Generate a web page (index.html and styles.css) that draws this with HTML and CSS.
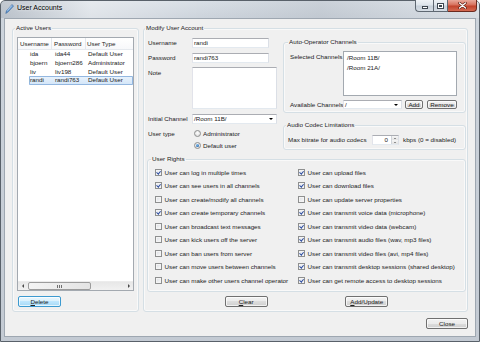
FILE: index.html
```html
<!DOCTYPE html>
<html>
<head>
<meta charset="utf-8">
<title>User Accounts</title>
<link rel="stylesheet" href="styles.css">
</head>
<body>
<div class="window">
  <div class="titlebar">
    <svg class="app-icon" width="9" height="10" viewBox="0 0 9 10">
      <path d="M7 0.6 L8.5 2.1 L3.2 7.8 L0.8 9.4 L1.6 6.6 Z" fill="#6c9fd6" stroke="#2f5f97" stroke-width="0.6"/>
      <path d="M6.9 1.4 L2.2 6.6" stroke="#e4f1ff" stroke-width="0.7"/>
    </svg>
    <span class="title">User Accounts</span>
    <div class="caption">
      <span class="cap cap-min"><span class="g-min"></span></span>
      <span class="cap cap-max"><span class="g-max"></span></span>
      <span class="cap cap-close">
        <svg width="9" height="7" viewBox="0 0 9 7">
          <path d="M1.5 1 L7.5 6 M7.5 1 L1.5 6" stroke="#5a1d12" stroke-width="2.6" stroke-linecap="round"/>
          <path d="M1.5 1 L7.5 6 M7.5 1 L1.5 6" stroke="#ffffff" stroke-width="1.3" stroke-linecap="round"/>
        </svg>
      </span>
    </div>
  </div>

  <div class="client">
    <div class="groups">
      <fieldset class="group active-users">
        <legend>Active Users</legend>
        <div class="listview">
          <div class="lv-header">
            <span class="h1">Username</span><span class="h2">Password</span><span class="h3">User Type</span>
          </div>
          <div class="lv-row"><div class="lv-cells"><span class="d1">ida</span><span class="d2">ida44</span><span class="d3">Default User</span></div></div>
          <div class="lv-row"><div class="lv-cells"><span class="d1">bjoern</span><span class="d2">bjoern286</span><span class="d3">Administrator</span></div></div>
          <div class="lv-row"><div class="lv-cells"><span class="d1">liv</span><span class="d2">liv198</span><span class="d3">Default User</span></div></div>
          <div class="lv-row sel"><div class="lv-cells"><span class="d1">randi</span><span class="d2">randi763</span><span class="d3">Default User</span></div></div>
          <div class="lv-fill"></div>
          <div class="hscroll">
            <span class="sb-btn"><span class="arr-left"></span></span>
            <span class="sb-track"><span class="sb-thumb"><span class="grip"></span></span></span>
            <span class="sb-btn"><span class="arr-right"></span></span>
          </div>
        </div>
        <button class="btn btn-focus btn-delete"><u>D</u>elete</button>
      </fieldset>

      <fieldset class="group modify">
        <legend>Modify User Account</legend>
        <div class="top">
          <div class="form">
            <span class="lbl mid">Username</span>
            <div class="edit w-short">randi</div>
            <span class="lbl mid">Password</span>
            <div class="edit w-short">randi763</div>
            <span class="lbl note-lbl">Note</span>
            <div class="edit textarea"></div>
            <span class="lbl mid">Initial Channel</span>
            <div class="combo"><span>/Room 11B/</span><span class="drop"></span></div>
            <span class="lbl type-lbl">User type</span>
            <div class="radios">
              <div class="radio-item"><span class="radio"></span><span>Administrator</span></div>
              <div class="radio-item"><span class="radio on"></span><span>Default user</span></div>
            </div>
          </div>

          <div class="right-col">
            <fieldset class="group autoop">
              <legend>Auto-Operator Channels</legend>
              <div class="ao-grid">
                <span class="lbl sel-lbl">Selected Channels</span>
                <div class="listbox">
                  <div class="lb-item">/Room 11B/</div>
                  <div class="lb-item">/Room 21A/</div>
                </div>
                <span class="lbl mid">Available Channels</span>
                <div class="avail-row">
                  <div class="combo combo-small"><span>/</span><span class="drop"></span></div>
                  <button class="btn btn-add">Add</button>
                  <button class="btn btn-remove">Remove</button>
                </div>
              </div>
            </fieldset>
            <fieldset class="group audio">
              <legend>Audio Codec Limitations</legend>
              <div class="audio-row">
                <span class="lbl bitrate-lbl">Max bitrate for audio codecs</span>
                <div class="spin"><span class="spin-val">0</span><span class="spin-btns"><span class="sp-up"></span><span class="sp-down"></span></span></div>
                <span class="lbl">kbps (0 = disabled)</span>
              </div>
            </fieldset>
          </div>
        </div>

        <fieldset class="group rights">
          <legend>User Rights</legend>
          <div class="rights-grid">
            <div class="chk-item"><span class="chk on"></span><span>User can log in multiple times</span></div>
            <div class="chk-item"><span class="chk on"></span><span>User can upload files</span></div>
            <div class="chk-item"><span class="chk on"></span><span>User can see users in all channels</span></div>
            <div class="chk-item"><span class="chk on"></span><span>User can download files</span></div>
            <div class="chk-item"><span class="chk"></span><span>User can create/modify all channels</span></div>
            <div class="chk-item"><span class="chk"></span><span>User can update server properties</span></div>
            <div class="chk-item"><span class="chk on"></span><span>User can create temporary channels</span></div>
            <div class="chk-item"><span class="chk on"></span><span>User can transmit voice data (microphone)</span></div>
            <div class="chk-item"><span class="chk"></span><span>User can broadcast text messages</span></div>
            <div class="chk-item"><span class="chk on"></span><span>User can transmit video data (webcam)</span></div>
            <div class="chk-item"><span class="chk"></span><span>User can kick users off the server</span></div>
            <div class="chk-item"><span class="chk on"></span><span>User can transmit audio files (wav, mp3 files)</span></div>
            <div class="chk-item"><span class="chk"></span><span>User can ban users from server</span></div>
            <div class="chk-item"><span class="chk on"></span><span>User can transmit video files (avi, mp4 files)</span></div>
            <div class="chk-item"><span class="chk"></span><span>User can move users between channels</span></div>
            <div class="chk-item"><span class="chk on"></span><span>User can transmit desktop sessions (shared desktop)</span></div>
            <div class="chk-item"><span class="chk"></span><span>User can make other users channel operator</span></div>
            <div class="chk-item"><span class="chk on"></span><span>User can get remote access to desktop sessions</span></div>
          </div>
        </fieldset>

        <div class="action-row">
          <button class="btn btn-wide"><u>C</u>lear</button>
          <button class="btn btn-wide"><u>A</u>dd/Update</button>
        </div>
      </fieldset>
    </div>

    <div class="footer">
      <button class="btn btn-close">Close</button>
    </div>
  </div>
</div>
</body>
</html>
```

FILE: styles.css
```css
* { box-sizing: border-box; }

html, body {
  margin: 0;
  padding: 0;
}

body {
  width: 480px;
  height: 342px;
  overflow: hidden;
  background: #ffffff;
  font-family: "Liberation Sans", Arial, sans-serif;
  font-size: 6.25px;
  color: #222;
}

/* ---------- window frame ---------- */
.window {
  width: 480px;
  height: 342px;
  display: flex;
  flex-direction: column;
  border: 1px solid #59616a;
  border-radius: 5px 5px 0 0;
  background: linear-gradient(to bottom, #d9dfe6 0px, #cdd4dc 16px, #c3cad3 100%);
}

.titlebar {
  height: 17px;
  flex: none;
  display: flex;
  align-items: flex-start;
  background: linear-gradient(to right, rgba(150,158,168,0.35) 0, rgba(255,255,255,0.35) 90px, rgba(255,255,255,0) 200px, rgba(160,168,178,0.25) 320px, rgba(255,255,255,0.2) 480px);
}

.app-icon {
  margin: 3px 0 0 4px;
  flex: none;
}

.title {
  margin: 3px 0 0 3px;
  font-size: 7px;
  line-height: 8px;
  color: #000;
  text-shadow: 0 0 3px rgba(255,255,255,0.9);
}

.caption {
  margin: -1px 2px 0 auto;
  display: flex;
  height: 12px;
}

.cap {
  height: 12px;
  display: flex;
  align-items: center;
  justify-content: center;
  border: 1px solid #5f6872;
  border-top: none;
  background: linear-gradient(to bottom, #eef2f6 0%, #dde4eb 45%, #c6cfd9 55%, #d6dde5 100%);
}

.cap-min {
  width: 18px;
  border-radius: 0 0 0 4px;
  border-right: none;
}

.cap-max {
  width: 15px;
}

.cap-close {
  width: 29px;
  border-left: none;
  border-radius: 0 0 4px 0;
  border-color: #6b2a1f;
  background: linear-gradient(to bottom, #e9a99b 0%, #d7705c 45%, #c2432c 55%, #d46a52 100%);
}

.g-min {
  width: 6px;
  height: 3px;
  margin-top: 3px;
  background: #fff;
  border: 1px solid #3d4650;
}

.g-max {
  width: 7px;
  height: 6px;
  border: 1px solid #3d4650;
  background: #fff;
  box-shadow: inset 0 0 0 1px #fff, inset 0 0 0 2px #3d4650;
}

/* ---------- client ---------- */
.client {
  flex: 1;
  margin: 0 3px 4px 3px;
  border: 1px solid #9ea7b1;
  background: #f0f0f0;
  padding: 5px 7px 7px 7px;
  display: flex;
  flex-direction: column;
}

.groups {
  height: 288px;
  flex: none;
  display: flex;
  gap: 4px;
}

.footer {
  margin-top: 6px;
  display: flex;
  justify-content: flex-end;
}

/* ---------- group boxes ---------- */
.group {
  margin: 0;
  min-width: 0;
  border: 1px solid #d5dfe5;
  border-radius: 3px;
  display: flex;
  flex-direction: column;
  box-shadow: inset 0 0 0 1px rgba(255,255,255,0.6);
}

.group > legend {
  padding: 0 1px;
  margin-left: -2px;
  line-height: 8px;
  font-size: 6.25px;
}

.active-users {
  width: 127px;
  flex: none;
  padding: 5px 4px 4px 4px;
}

.modify {
  flex: 1;
  padding: 6px 1px 4px 3px;
}

/* ---------- list view ---------- */
.listview {
  flex: 1;
  border: 1px solid #a3a9b0;
  background: #fff;
  display: flex;
  flex-direction: column;
  margin-bottom: 5px;
  overflow: hidden;
}

.lv-header {
  height: 12px;
  flex: none;
  display: flex;
  line-height: 11px;
  border-bottom: 1px solid #e5e9ee;
  background: linear-gradient(to bottom, #ffffff, #f7f8fa);
  white-space: nowrap;
}

.lv-header span {
  flex: none;
}

.h1 { width: 34px; padding-left: 2px; border-right: 1px solid #e3e7ec; }
.h2 { width: 34px; padding-left: 2px; border-right: 1px solid #e3e7ec; }
.h3 { flex: 1; padding-left: 1px; }

.lv-row {
  height: 8.75px;
  flex: none;
  display: flex;
  padding-left: 11px;
  white-space: nowrap;
}

.lv-cells {
  flex: 1;
  display: flex;
  line-height: 8.75px;
}

.lv-row.sel .lv-cells {
  background: linear-gradient(to bottom, #eaf3fc, #d2e5f8);
  box-shadow: inset 0 0 0 1px #93b7e0;
  border-radius: 1px;
}

.d1 { width: 23px; padding-left: 1px; flex: none; }
.d2 { width: 34px; padding-left: 3px; flex: none; }
.d3 { padding-left: 2px; flex: none; }

.lv-fill { flex: 1; }

.hscroll {
  height: 9px;
  flex: none;
  display: flex;
  background: linear-gradient(to bottom, #e7e7e7, #f1f1f1);
  border-top: 1px solid #ececec;
}

.sb-btn {
  width: 9px;
  flex: none;
  display: flex;
  align-items: center;
  justify-content: center;
}

.arr-left {
  width: 0; height: 0;
  border-top: 2px solid transparent;
  border-bottom: 2px solid transparent;
  border-right: 2px solid #4b4b4b;
}

.arr-right {
  width: 0; height: 0;
  border-top: 2px solid transparent;
  border-bottom: 2px solid transparent;
  border-left: 2px solid #4b4b4b;
}

.sb-track {
  flex: 1;
  display: flex;
}

.sb-thumb {
  margin-left: 1px;
  width: 63px;
  border: 1px solid #9c9c9c;
  border-radius: 2px;
  background: linear-gradient(to right, #f4f4f4, #e4e4e4);
  display: flex;
  align-items: center;
  justify-content: center;
}

.grip {
  width: 5px;
  height: 3px;
  background: repeating-linear-gradient(to right, #6f6f6f 0 1px, transparent 1px 2px);
}

/* ---------- buttons ---------- */
.btn {
  margin: 0;
  padding: 0;
  height: 11px;
  font: inherit;
  font-size: 6.25px;
  line-height: 9px;
  color: #222;
  border: 1px solid #707070;
  border-radius: 2px;
  background: linear-gradient(to bottom, #f2f2f2 0%, #ebebeb 50%, #dddddd 50%, #cfcfcf 100%);
  box-shadow: inset 0 0 0 1px rgba(255,255,255,0.7);
  text-align: center;
  flex: none;
}

.btn-focus {
  border-color: #3c9ad0;
  background: linear-gradient(to bottom, #eaf6fd 0%, #d9f0fc 50%, #bee6fd 50%, #a7d9f5 100%);
}

.btn-delete { width: 43px; margin-left: 1px; }
.btn-wide { width: 43px; }
.btn-close { width: 42px; }
.btn-add { width: 18px; height: 9px; line-height: 7px; }
.btn-remove { width: 30px; height: 9px; line-height: 7px; }

/* ---------- modify group ---------- */
.top {
  height: 113px;
  flex: none;
  display: grid;
  grid-template-columns: 130px 183px;
  column-gap: 6px;
}

.form {
  display: grid;
  grid-template-columns: 45px 85px;
  grid-template-rows: 10px 10px 42px 10px 23px;
  row-gap: 4.5px;
}

.lbl {
  white-space: nowrap;
  line-height: 8px;
}

.form .lbl { padding-left: 1px; }

.mid { align-self: center; }

.note-lbl { align-self: start; margin-top: 2px; }

.type-lbl { align-self: start; line-height: 11px; }

.edit {
  height: 10px;
  background: #fff;
  border: 1px solid;
  border-color: #abadb3 #dbdfe6 #e3e9ef #e2e3ea;
  padding-left: 1px;
  line-height: 8px;
  white-space: nowrap;
}

.w-short { width: 77px; }

.textarea { height: 42px; width: 85px; }

.combo {
  height: 10px;
  background: #fff;
  border: 1px solid;
  border-color: #abadb3 #dbdfe6 #e3e9ef #e2e3ea;
  padding: 0 2px 0 1px;
  line-height: 8px;
  display: flex;
  align-items: center;
  justify-content: space-between;
  white-space: nowrap;
}

.drop {
  width: 0; height: 0;
  border-left: 2px solid transparent;
  border-right: 2px solid transparent;
  border-top: 2px solid #000;
  margin-right: 1px;
}

.radios {
  display: flex;
  flex-direction: column;
}

.radio-item {
  height: 11.5px;
  display: flex;
  align-items: center;
  gap: 2px;
  padding-left: 2px;
  white-space: nowrap;
}

.radio {
  width: 7px;
  height: 7px;
  border-radius: 50%;
  border: 1px solid #8e8f8f;
  background: radial-gradient(circle at 50% 40%, #ffffff 0%, #e6e6e6 60%, #d2d2d2 100%);
  display: flex;
  align-items: center;
  justify-content: center;
  flex: none;
}

.radio.on::after {
  content: "";
  width: 3px;
  height: 3px;
  border-radius: 50%;
  background: radial-gradient(circle at 40% 35%, #7fc0f0 0%, #2a6cb3 70%, #1a4f8c 100%);
}

.right-col {
  display: flex;
  flex-direction: column;
}

.autoop {
  height: 75px;
  flex: none;
  padding: 5px 8px 3px 6px;
}

.ao-grid {
  display: grid;
  grid-template-columns: 53px 114px;
  grid-template-rows: 45px 9px;
  row-gap: 4px;
}

.sel-lbl { align-self: start; margin-top: 2px; }

.listbox {
  background: #fff;
  border: 1px solid #a3a9b0;
  padding: 1px 0 0 3px;
}

.lb-item {
  height: 10px;
  line-height: 10px;
  white-space: nowrap;
}

.avail-row {
  display: flex;
  align-items: center;
  gap: 3px;
}

.combo-small {
  width: 59px;
  height: 9px;
  line-height: 7px;
}

.btn-remove { margin-left: 1px; }

.audio {
  margin-top: 8px;
  height: 29px;
  flex: none;
  padding: 6px 4px 4px 4px;
}

.audio-row {
  display: flex;
  align-items: center;
  height: 10px;
}

.bitrate-lbl { width: 84px; }

.spin {
  width: 27px;
  height: 10px;
  background: #fff;
  border: 1px solid;
  border-color: #abadb3 #dbdfe6 #e3e9ef #e2e3ea;
  display: flex;
  margin-right: 4px;
}

.spin-val {
  flex: 1;
  text-align: right;
  line-height: 8px;
  padding-right: 3px;
}

.spin-btns {
  width: 7px;
  display: flex;
  flex-direction: column;
  border-left: 1px solid #d0d4da;
}

.sp-up, .sp-down {
  flex: 1;
  display: flex;
  align-items: center;
  justify-content: center;
  background: linear-gradient(to bottom, #f6f6f6, #e2e2e2);
}

.sp-up::after {
  content: "";
  border-left: 1.5px solid transparent;
  border-right: 1.5px solid transparent;
  border-bottom: 1.5px solid #333;
}

.sp-down::after {
  content: "";
  border-left: 1.5px solid transparent;
  border-right: 1.5px solid transparent;
  border-top: 1.5px solid #333;
}

/* ---------- user rights ---------- */
.rights {
  margin-top: 4px;
  height: 137px;
  flex: none;
  padding: 2.5px 0 4px 7px;
}

.rights > legend { margin-left: -4px; }

.rights-grid {
  display: grid;
  grid-template-columns: 143px 1fr;
  grid-auto-rows: 13.5px;
}

.chk-item {
  display: flex;
  align-items: center;
  gap: 2.5px;
  white-space: nowrap;
}

.chk {
  width: 7px;
  height: 7px;
  flex: none;
  border: 1px solid #8e8f8f;
  background: linear-gradient(135deg, #d9dce1 0%, #eeeff1 60%, #fafafa 100%);
  box-shadow: inset 0 0 0 1px #f4f4f4;
  display: flex;
  align-items: center;
  justify-content: center;
}

.chk.on {
  background: linear-gradient(135deg, #e4e7ec 0%, #f6f7f8 100%);
}

.chk.on::after {
  content: "";
  width: 1.6px;
  height: 3.4px;
  border: solid #2a4a9e;
  border-width: 0 1.1px 1.1px 0;
  transform: rotate(40deg);
  margin-top: -1px;
}

.action-row {
  margin-top: 4px;
  height: 11px;
  flex: none;
  display: flex;
  justify-content: space-evenly;
}
```
